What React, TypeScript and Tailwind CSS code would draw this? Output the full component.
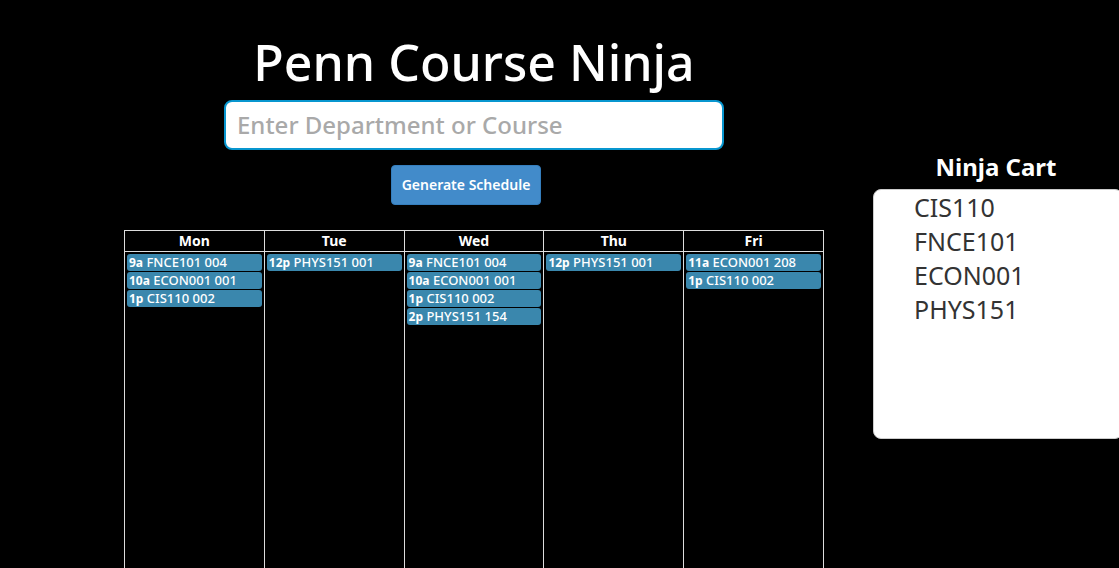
const days = [
  { name: 'Mon', items: [['9a', 'FNCE101 004'], ['10a', 'ECON001 001'], ['1p', 'CIS110 002']] },
  { name: 'Tue', items: [['12p', 'PHYS151 001']] },
  { name: 'Wed', items: [['9a', 'FNCE101 004'], ['10a', 'ECON001 001'], ['1p', 'CIS110 002'], ['2p', 'PHYS151 154']] },
  { name: 'Thu', items: [['12p', 'PHYS151 001']] },
  { name: 'Fri', items: [['11a', 'ECON001 208'], ['1p', 'CIS110 002']] },
];
const cart = ['CIS110', 'FNCE101', 'ECON001', 'PHYS151'];

export default function App() {
  return (
    <div className="flex min-h-screen items-stretch overflow-x-hidden bg-black pl-31 font-['Noto_Sans',sans-serif] text-white">
      <main className="flex min-w-0 flex-1 flex-col items-center pt-7">
        <h1 className="mb-1 text-[50px] leading-[68px] font-medium">Penn Course Ninja</h1>
        <input
          aria-label="Department or course"
          placeholder="Enter Department or Course"
          className="h-[50px] w-full max-w-[500px] rounded-lg border-2 border-[#0896cf] bg-white px-[11px] pb-0.5 text-[24px] font-medium text-[#333] outline-none placeholder:text-[#a9a9a9]"
        />
        <button type="button" className="mt-[15px] mr-4 h-10 rounded border border-[#357ebd] bg-[#428bca] px-2.5 pb-px text-[14px] font-semibold">
          Generate Schedule
        </button>
        <table className="mt-[25px] w-full flex-1 table-fixed border-collapse">
          <thead>
            <tr className="h-[21px]">
              {days.map((d) => (
                <th key={d.name} className="border border-[#ddd] p-0 text-[14px] leading-5 font-bold">{d.name}</th>
              ))}
            </tr>
          </thead>
          <tbody>
            <tr>
              {days.map((d) => (
                <td key={d.name} className="border-x border-[#ddd] px-0.5 pt-0.5 align-top">
                  <ul className="flex flex-col gap-px">
                    {d.items.map(([time, course]) => (
                      <li key={time} className="h-[17px] rounded-[3px] bg-[#3a87ad] px-0.5 text-[13px] leading-[17px] font-medium whitespace-nowrap">
                        <b className="text-[12px] font-bold">{time}</b> {course}
                      </li>
                    ))}
                  </ul>
                </td>
              ))}
            </tr>
          </tbody>
        </table>
      </main>
      <aside className="ml-[49px] w-[246px] shrink-0 pt-[150px]">
        <h2 className="text-center text-[24px] leading-[34px] font-bold">Ninja Cart</h2>
        <ul className="mt-[5px] -mr-1 h-[250px] rounded-lg border border-[#ccc] bg-white pl-10 text-[25px] leading-[34px] text-[#333]">
          {cart.map((c) => <li key={c}>{c}</li>)}
        </ul>
      </aside>
    </div>
  );
}
